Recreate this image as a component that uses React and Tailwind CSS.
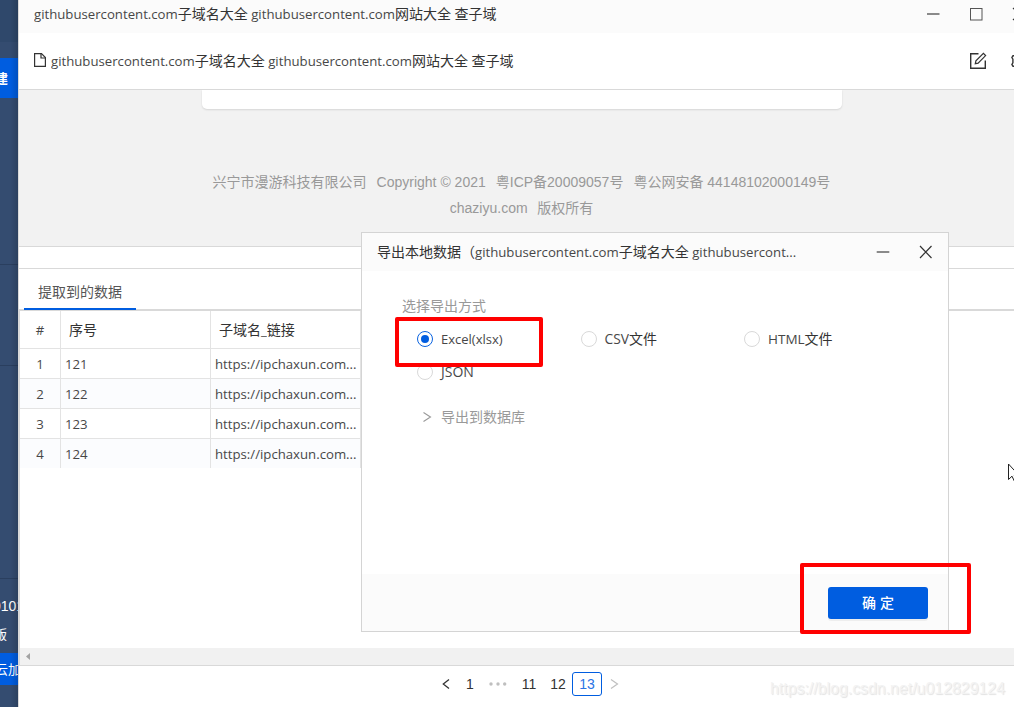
import React from "react";

const LATIN_RUN = /([\x20-\x7e]+)/;

function Mixed({ children, latin = "text-[13.2px] opacity-90" }) {
  return (
    <span className="whitespace-pre">
      {children.split(LATIN_RUN).map((part, i) =>
        part === "" ? null : (
          <span key={i} className={i % 2 ? latin : ""}>
            {part}
          </span>
        )
      )}
    </span>
  );
}

const PAGE_TITLE = "githubusercontent.com子域名大全 githubusercontent.com网站大全 查子域";
const ROWS = [121, 122, 123, 124];

function Sidebar() {
  return (
    <aside className="relative flex h-full w-[18px] shrink-0 flex-col overflow-hidden bg-[#344c70] text-[13px] text-white">
      <div className="h-[42px] shrink-0 bg-[#2f486b]" />
      <div className="h-[16px] shrink-0" />
      <div className="flex h-[40px] shrink-0 items-center bg-[#005de0]">
        <span className="-ml-[5px] pt-[1px] leading-none font-bold">建</span>
      </div>
      <div className="h-[167px] shrink-0 border-b border-[#2a3f5f]" />
      <div className="h-[101px] shrink-0 border-b border-[#2a3f5f]" />
      <div className="h-[213px] shrink-0 border-b border-[#2a3f5f]" />
      <div className="-ml-[7px] flex h-[54px] shrink-0 items-center whitespace-nowrap font-['Liberation_Sans',sans-serif] text-[14px]">
        0101
      </div>
      <div className="-ml-[6px] flex h-[20px] shrink-0 items-start leading-none">
        <span className="-mt-[5px]">版</span>
      </div>
      <div className="flex h-[32px] shrink-0 items-center bg-[#005de0]">
        <span className="-ml-[5px] whitespace-nowrap leading-none">云加</span>
      </div>
      <div className="absolute inset-y-0 right-0 w-[8px] bg-gradient-to-r from-transparent to-black/15" />
    </aside>
  );
}

function Radio({ label, checked, latin }) {
  return (
    <div className="flex h-[33px] w-[163.5px] items-center gap-2">
      <span
        className={
          "flex size-4 shrink-0 items-center justify-center rounded-full border bg-white " +
          (checked ? "border-[#0a63e0]" : "border-[#d9d9d9]")
        }
      >
        {checked && <span className="size-2 rounded-full bg-[#005de0]" />}
      </span>
      <Mixed latin={latin}>{label}</Mixed>
    </div>
  );
}

function ExportDialog() {
  return (
    <section className="absolute left-[361px] top-[232px] flex h-[400px] w-[588px] flex-col border border-[#d4d4d4] bg-white">
      <header className="flex h-[38px] shrink-0 items-center bg-[#fbfbfb] pl-[15px] pr-[15px]">
        <Mixed>导出本地数据（githubusercontent.com子域名大全 githubusercont...</Mixed>
        <svg className="ml-auto" width="57" height="14" viewBox="0 0 57 14" fill="none">
          <path d="M0.7 7H13.3" stroke="#8a8a8a" strokeWidth="2" />
          <path d="M44 1L55.5 13M55.5 1L44 13" stroke="#333" strokeWidth="1.2" />
        </svg>
      </header>
      <div className="flex flex-1 flex-col pl-[40px] pt-[25px]">
        <div className="h-[20px] leading-[20px] text-[#999]">选择导出方式</div>
        <div className="mt-[6px] flex flex-wrap pl-[15px]">
          <Radio label="Excel(xlsx)" checked latin="text-[13px] opacity-90" />
          <Radio label="CSV文件" latin="text-[13.8px] opacity-90" />
          <Radio label="HTML文件" latin="text-[13.5px] opacity-90" />
          <Radio label="JSON" latin="text-[14px] opacity-90" />
        </div>
        <div className="mt-[18px] flex h-[22px] items-center pl-[20px] text-[#999]">
          <svg width="10" height="12" viewBox="0 0 10 12" fill="none">
            <path d="M1.5 1.5L8.5 6L1.5 10.5" stroke="#999" strokeWidth="1.1" />
          </svg>
          <span className="ml-[9px]">导出到数据库</span>
        </div>
      </div>
      <footer className="flex h-[57px] shrink-0 items-center justify-end bg-[#fbfbfb] pr-[20px]">
        <button className="flex h-[32px] w-[100px] items-center justify-center gap-1 rounded-[3px] bg-[#005de0] font-medium text-white shadow-[0_2px_0_rgba(0,0,0,0.05)]">
          <span>确</span>
          <span>定</span>
        </button>
      </footer>
    </section>
  );
}

export default function App() {
  return (
    <div className="relative flex h-[707px] w-[1014px] overflow-hidden bg-white font-['Open_Sans','Noto_Sans_CJK_SC',sans-serif] text-[14px] leading-[20px] text-[#333]">
      <Sidebar />
      <main className="flex min-w-0 flex-1 flex-col overflow-hidden border-l border-[#d9d9d9]">
        <header className="relative flex h-[33px] shrink-0 items-center bg-[#fbfbfb] pb-[6px] pl-[15px]">
          <Mixed>{PAGE_TITLE}</Mixed>
          <svg className="absolute right-0 top-[6px]" width="90" height="16" viewBox="0 0 90 16" fill="none">
            <path d="M3 8H15.5" stroke="#8a8a8a" strokeWidth="2" />
            <rect x="46.5" y="2.5" width="11.5" height="11.5" stroke="#555" />
            <path d="M89 2L101 14M101 2L89 14" stroke="#333" strokeWidth="1.2" />
          </svg>
        </header>
        <div className="relative flex h-[57px] shrink-0 items-center gap-[5px] border-b border-[#d9d9d9] pl-[15px]">
          <svg className="mb-[2px]" width="12" height="14" viewBox="0 0 12 14" fill="none" stroke="#333" strokeWidth="1.2">
            <path d="M0.6 0.6H7.5L11.4 4.5V13.4H0.6Z" />
            <path d="M7 0.6V5H11.4" />
          </svg>
          <Mixed>{PAGE_TITLE}</Mixed>
          <svg className="absolute right-0 top-[18px]" width="46" height="20" viewBox="0 0 46 20" fill="none" stroke="#333">
            <path d="M10.5 2.7H2.7V17.3H17.3V9.5" strokeWidth="1.4" />
            <path d="M7.3 12.7L7.9 9.9L15.4 2.4L17.6 4.6L10.1 12.1Z" strokeWidth="1.2" />
            <path d="M47 4.7H45L43.9 6.6L44.9 8.2V11.8L43.9 13.4L45 15.3H47" strokeWidth="1.4" />
          </svg>
        </div>

        <section className="flex h-[157px] shrink-0 flex-col items-start border-b border-[#d9d9d9] bg-[#f2f2f2] font-['Liberation_Sans','Noto_Sans_CJK_SC',sans-serif] text-[#999]">
          <div className="ml-[183px] h-[19px] w-[640px] shrink-0 rounded-b-[5px] bg-white shadow-[0_1px_2px_rgba(0,0,0,0.12)]" />
          <div className="mt-[60px] flex gap-[10px] pl-[193.6px] leading-[26px] whitespace-nowrap">
            <span>兴宁市漫游科技有限公司</span>
            <span>Copyright © 2021</span>
            <span>粤ICP备20009057号</span>
            <span>粤公网安备 44148102000149号</span>
          </div>
          <div className="flex gap-[9.6px] pl-[430.8px] leading-[26px]">
            <span>chaziyu.com</span>
            <span>版权所有</span>
          </div>
        </section>

        <div className="h-[22px] shrink-0 border-b border-[#d9d9d9]" />
        <nav className="flex h-[42px] shrink-0 items-start border-b-2 border-[#d9d9d9] pl-[5px]">
          <div className="flex h-[41px] w-[112px] shrink-0 items-center justify-center border-b-2 border-[#005de0] pt-[7px] text-[#555]">
            提取到的数据
          </div>
        </nav>

        <div className="flex h-[355px] shrink-0 flex-col border-b border-l border-[#d9d9d9]">
          <div className="grid w-[341px] grid-cols-[41px_150px_150px]">
            <div className="flex h-[38px] items-center justify-center border-r border-b border-[#e3e3e3]">
              <Mixed>#</Mixed>
            </div>
            <div className="flex h-[38px] items-center border-r border-b border-[#e3e3e3] pl-[8px]">序号</div>
            <div className="flex h-[38px] items-center border-r border-b border-[#e3e3e3] pl-[8px]">
              <Mixed>子域名_链接</Mixed>
            </div>
          </div>
          {ROWS.map((n, i) => (
            <div
              key={n}
              className={
                "grid w-[341px] grid-cols-[41px_150px_150px] border-[#e3e3e3] " +
                (i % 2 ? "bg-[#fbfcfe] " : "") +
                (i < 3 ? "h-[30px] border-b" : "h-[29px]")
              }
            >
              <div className="flex items-center justify-center border-r border-[#e3e3e3]">
                <Mixed>{String(i + 1)}</Mixed>
              </div>
              <div className="flex items-center border-r border-[#e3e3e3] pl-[4px]">
                <Mixed>{String(n)}</Mixed>
              </div>
              <div className="flex items-center border-r border-[#e3e3e3] pl-[4px]">
                <Mixed>https://ipchaxun.com...</Mixed>
              </div>
            </div>
          ))}
          <div className="mt-auto flex h-[17px] shrink-0 items-center bg-[#f1f1f1] pl-[6px]">
            <svg width="4" height="7" viewBox="0 0 4 7" fill="#a3a3a3">
              <path d="M4 0V7L0 3.5Z" />
            </svg>
          </div>
        </div>

        <footer className="flex flex-1 items-center pb-[5px] pl-[423px] font-['Liberation_Sans',sans-serif]">
          <svg className="shrink-0" width="8" height="12" viewBox="0 0 8 12" fill="none">
            <path d="M7 1.5L1.3 6L7 10.5" stroke="#333" strokeWidth="1.3" />
          </svg>
          <span className="ml-[12px] w-[16px] text-center">1</span>
          <svg className="ml-[11px] shrink-0" width="18" height="4" viewBox="0 0 18 4" fill="#bfbfbf">
            <circle cx="2" cy="2" r="1.7" />
            <circle cx="9" cy="2" r="1.7" />
            <circle cx="15.7" cy="2" r="1.7" />
          </svg>
          <span className="ml-[14px] w-[16px] text-center">11</span>
          <span className="ml-[13px] w-[16px] text-center">12</span>
          <span className="ml-[6px] flex h-[24px] w-[30px] items-center justify-center rounded-[3px] border border-[#005de0] text-[#2a74e4]">
            13
          </span>
          <svg className="ml-[8px] shrink-0" width="9" height="12" viewBox="0 0 9 12" fill="none">
            <path d="M1 1.5L7.5 6L1 10.5" stroke="#bfbfbf" strokeWidth="1.2" />
          </svg>
        </footer>
      </main>

      <ExportDialog />
      <div className="absolute left-[395px] top-[317px] h-[50px] w-[148px] rounded-[2px] border-4 border-[#ff0000]" />
      <div className="absolute left-[800px] top-[563px] h-[71px] w-[171px] rounded-[2px] border-4 border-[#ff0000]" />
      <svg className="absolute left-[1007px] top-[463px]" width="12" height="20" viewBox="0 0 12 20">
        <path d="M1.5 1V16.5L5 13.2L7.5 18.5L9.5 17.5L7.2 12.5H12Z" fill="#fff" stroke="#222" />
      </svg>
      <div className="absolute right-[9px] top-[679px] font-['Liberation_Sans',sans-serif] text-[15.9px] text-[#f3f3f3] [text-shadow:1px_1px_1px_#e2e2e2]">
        https://blog.csdn.net/u012829124
      </div>
    </div>
  );
}
